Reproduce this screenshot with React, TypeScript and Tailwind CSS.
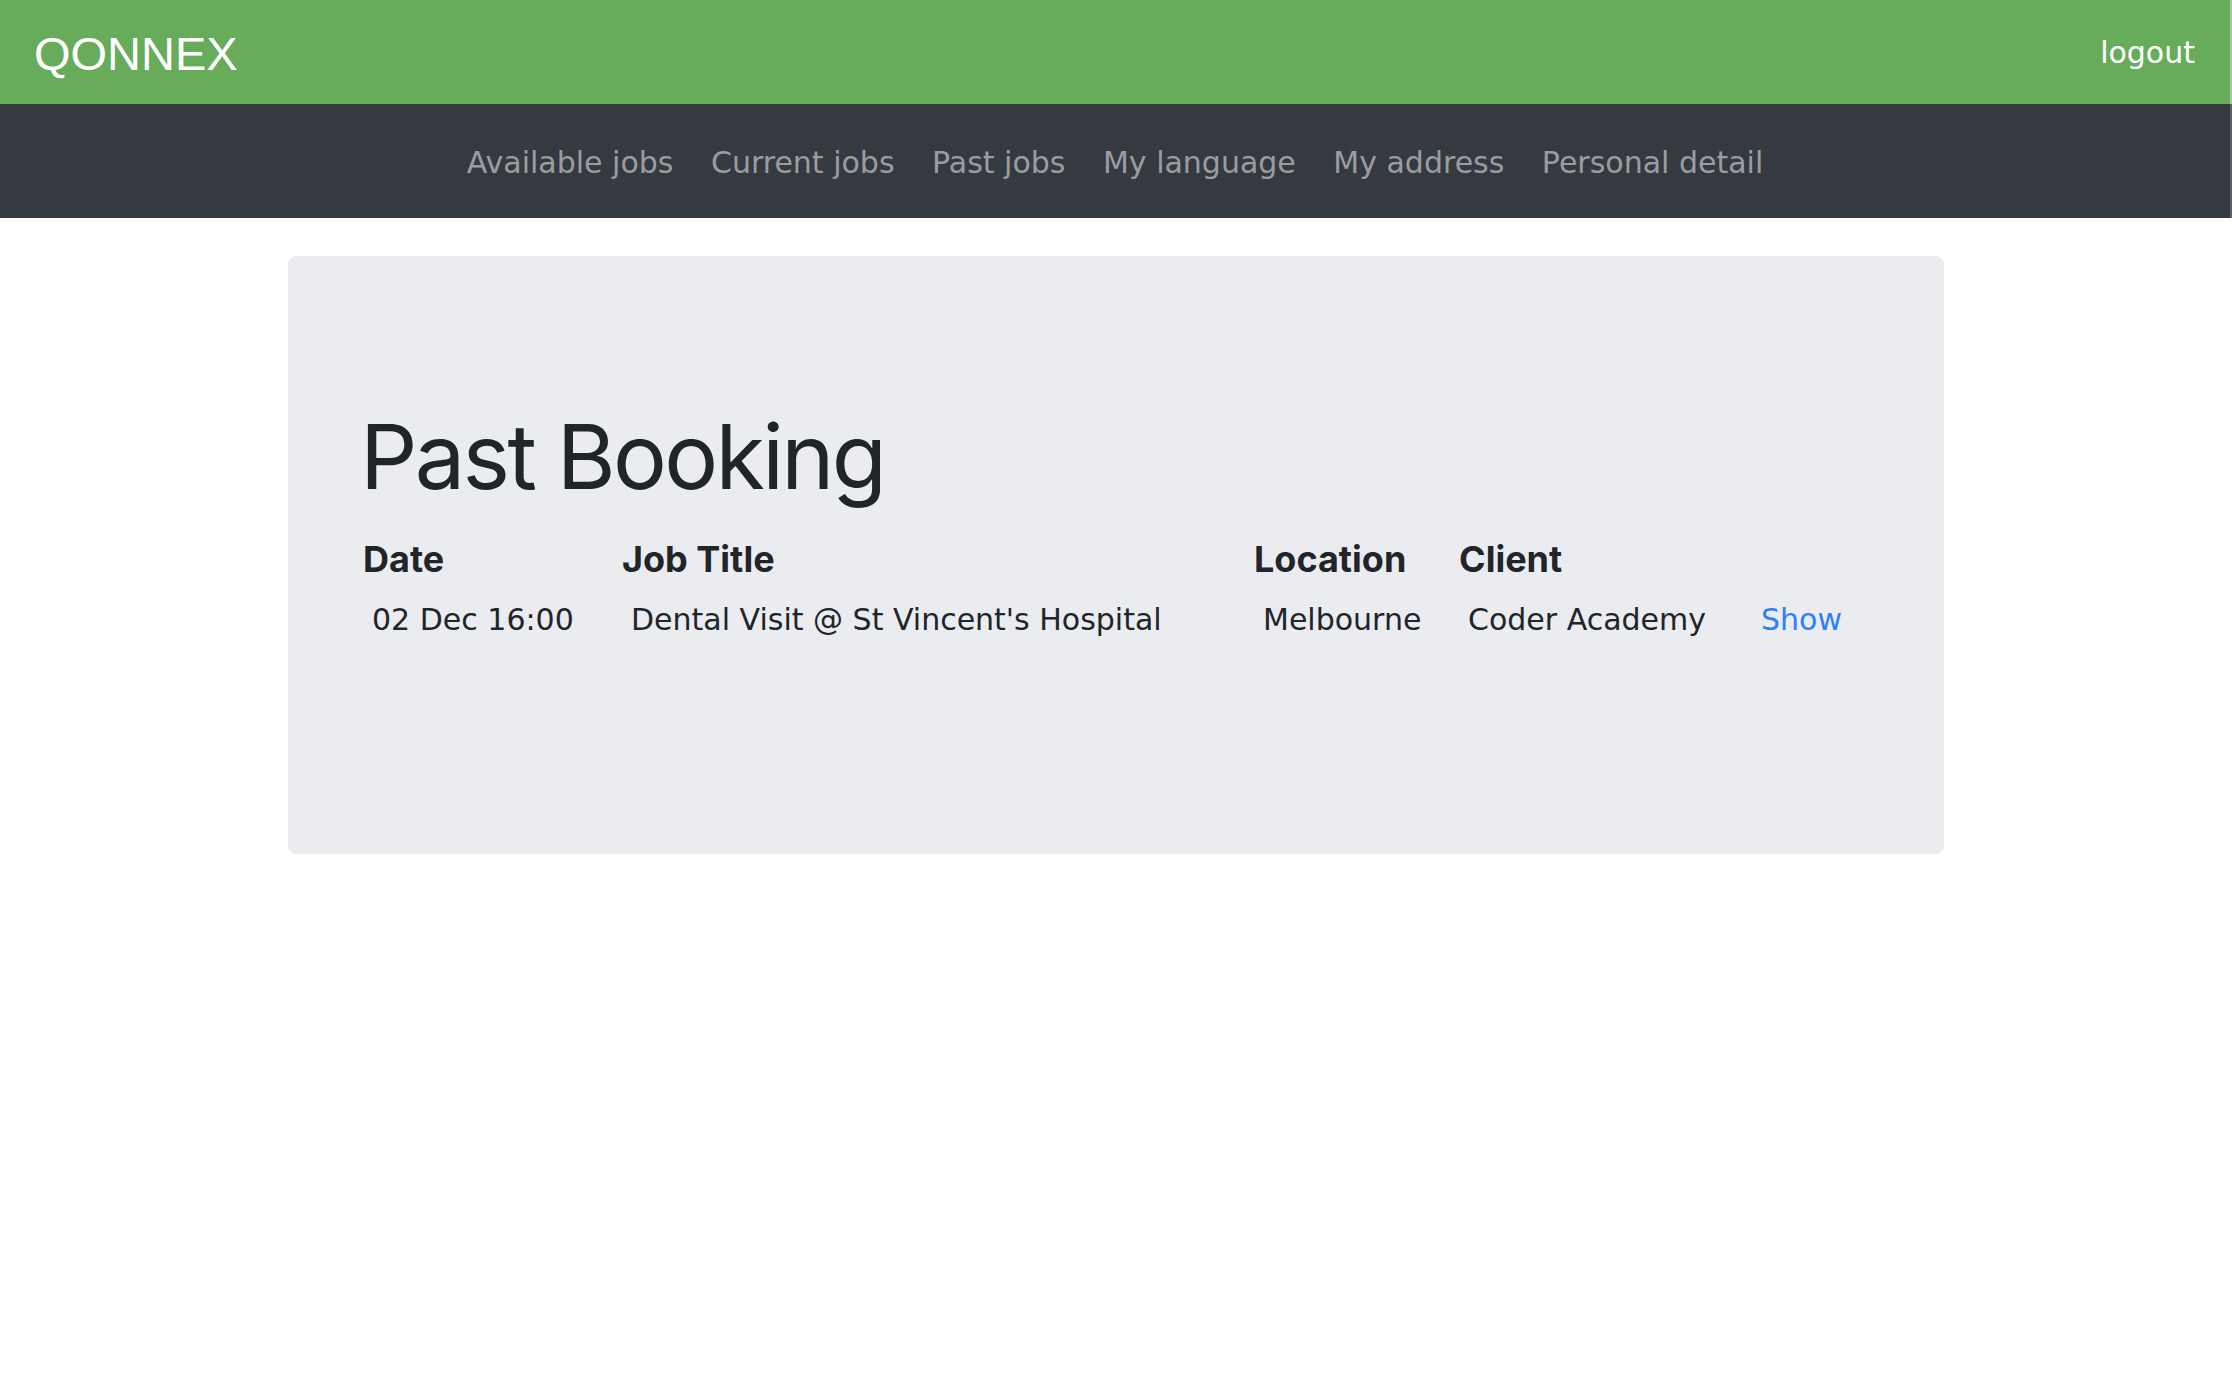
import React from "react";

const navItems = [
  "Available jobs",
  "Current jobs",
  "Past jobs",
  "My language",
  "My address",
  "Personal detail",
];

export default function App() {
  return (
    <div className="min-h-[1394px] w-full bg-white">
      <header className="flex h-[104px] items-center justify-between border-r-2 border-[#a9c9a3] bg-[#67ac5b] pl-[34px] pr-[35px]">
        <span
          className="pt-[2px] text-[47px] leading-none text-white"
          style={{ fontFamily: '"Liberation Sans", Arial, sans-serif' }}
        >
          QONNEX
        </span>
        <a
          className="pt-[2px] text-[30px] leading-none text-white"
          style={{ fontFamily: '"DejaVu Sans", Verdana, sans-serif' }}
        >
          logout
        </a>
      </header>
      <nav
        className="flex h-[114px] items-center justify-center gap-[37.5px] border-r-2 border-[#5b6064] bg-[#343a40] pt-[3px]"
        style={{ fontFamily: '"DejaVu Sans", Verdana, sans-serif' }}
      >
        {navItems.map((n) => (
          <a key={n} className="text-[30px] leading-none text-[#9a9da0]">
            {n}
          </a>
        ))}
      </nav>
      <main className="flex justify-center pt-[38px]">
        <div className="h-[598px] w-[1656px] rounded-[8px] bg-[#eaecf0] px-[72px] pt-[147px] text-[#212529]">
          <h1
            className="mb-[27px] text-[90px] font-normal leading-[1.2] tracking-[-0.03em]"
            style={{ fontFamily: 'Inter, "Liberation Sans", sans-serif' }}
          >
            Past Booking
          </h1>
          <div
            className="grid grid-cols-[259px_632px_205px_293px_1fr] pl-[3px] text-[36px] font-bold leading-[1.2]"
            style={{ fontFamily: 'Inter, "Liberation Sans", sans-serif' }}
          >
            <div>Date</div>
            <div>Job Title</div>
            <div>Location</div>
            <div>Client</div>
            <div></div>
          </div>
          <div
            className="mt-[16px] grid grid-cols-[259px_632px_205px_293px_1fr] pl-[3px] text-[30px] leading-[1.5]"
            style={{ fontFamily: '"DejaVu Sans", Verdana, sans-serif' }}
          >
            <div className="pl-[9px]">02 Dec 16:00</div>
            <div className="pl-[9px]">Dental Visit @ St Vincent's Hospital</div>
            <div className="pl-[9px]">Melbourne</div>
            <div className="pl-[9px]">Coder Academy</div>
            <div className="pl-[9px]">
              <a className="text-[#2e80fb]">Show</a>
            </div>
          </div>
        </div>
      </main>
    </div>
  );
}
